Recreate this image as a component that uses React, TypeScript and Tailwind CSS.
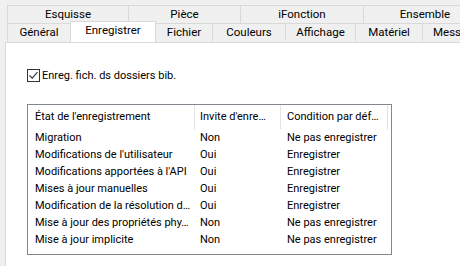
import React from "react";

const font = { fontFamily: "Roboto, 'Noto Sans', sans-serif" };

function Tab({ label, w, selected }: { label: string; w: string; selected?: boolean }) {
  return (
    <div
      className={
        "shrink-0 flex items-center justify-center border border-b-0 border-[#d9d9d9] -ml-px text-[11.5px] text-black whitespace-nowrap overflow-hidden " +
        w +
        (selected ? " bg-white h-[21px] -mt-[2px] relative z-10 pb-[2px]" : " bg-[#f0f0f0] h-[18px]")
      }
    >
      {label}
    </div>
  );
}

const rows: [string, string, string][] = [
  ["Migration", "Non", "Ne pas enregistrer"],
  ["Modifications de l'utilisateur", "Oui", "Enregistrer"],
  ["Modifications apportées à l'API", "Oui", "Enregistrer"],
  ["Mises à jour manuelles", "Oui", "Enregistrer"],
  ["Modification de la résolution d…", "Oui", "Enregistrer"],
  ["Mise à jour des propriétés phy…", "Non", "Ne pas enregistrer"],
  ["Mise à jour implicite", "Non", "Ne pas enregistrer"],
];

export default function App() {
  return (
    <div className="w-[460px] h-[266px] bg-[#f0f0f0] overflow-hidden flex flex-col text-black" style={font}>
      <div className="flex pl-[8px] pt-[5px]">
        <Tab label="Esquisse" w="w-[122px]" />
        <Tab label="Pièce" w="w-[113px]" />
        <Tab label="iFonction" w="w-[124px]" />
        <Tab label="Ensemble" w="w-[124px]" />
      </div>
      <div className="flex pl-[8px]">
        <Tab label="Général" w="w-[64px]" />
        <Tab label="Enregistrer" w="w-[86px]" selected />
        <Tab label="Fichier" w="w-[58px]" />
        <Tab label="Couleurs" w="w-[74px]" />
        <Tab label="Affichage" w="w-[71px]" />
        <Tab label="Matériel" w="w-[68px]" />
        <div className="shrink-0 h-[18px] w-[80px] -ml-px border border-b-0 border-[#d9d9d9] bg-[#f0f0f0] text-[11.5px] flex items-center pl-[10px] whitespace-nowrap">
          Messa
        </div>
      </div>
      <div className="flex-1 ml-[5px] bg-white border-l border-t border-[#d9d9d9] pl-[21px] pt-[26px] flex flex-col">
        <div className="flex items-center gap-[2px] h-[13px]">
          <div className="w-[13px] h-[13px] border border-[#333333] bg-white flex items-center justify-center">
            <svg width="11" height="11" viewBox="0 0 11 11">
              <path d="M1.5 5.5 L4.2 8.2 L9.5 2.2" fill="none" stroke="#333333" strokeWidth="1.1" />
            </svg>
          </div>
          <span className="text-[11px] leading-none">Enreg. fich. ds dossiers bib.</span>
        </div>
        <div className="mt-[22px] w-[365px] h-[151px] border border-[#828790] bg-white flex flex-col text-[11px]">
          <div className="flex h-[25px] items-center">
            <div className="w-[167px] h-full flex items-center pl-[7px] border-r border-[#e5e5e5] whitespace-nowrap overflow-hidden">État de l'enregistrement</div>
            <div className="w-[86px] h-full flex items-center pl-[5px] border-r border-[#e5e5e5] whitespace-nowrap overflow-hidden">Invite d'enre…</div>
            <div className="w-[107px] h-full flex items-center pl-[6px] border-r border-[#e5e5e5] whitespace-nowrap overflow-hidden">Condition par déf…</div>
          </div>
          {rows.map(([a, b, c]) => (
            <div key={a} className="flex h-[17px] items-center">
              <div className="w-[167px] pl-[7px] whitespace-nowrap overflow-hidden">{a}</div>
              <div className="w-[86px] pl-[5px]">{b}</div>
              <div className="w-[107px] pl-[6px] whitespace-nowrap">{c}</div>
            </div>
          ))}
        </div>
      </div>
    </div>
  );
}
